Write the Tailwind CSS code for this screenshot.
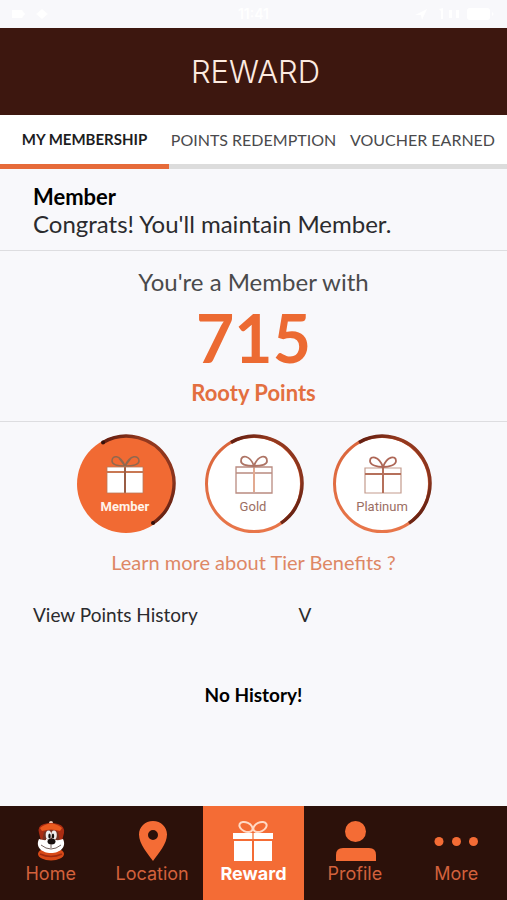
<!DOCTYPE html>
<html lang="en">
<head>
<meta charset="utf-8">
<meta name="viewport" content="width=device-width, initial-scale=1">
<title>Reward</title>
<script src="https://cdn.jsdelivr.net/npm/@tailwindcss/browser@4"></script>
</head>
<body class="flex min-h-screen flex-col bg-[#f8f8fb] font-['Lato',sans-serif] text-[#2b2b2e]">
<svg class="absolute size-0" aria-hidden="true">
  <defs>
    <linearGradient id="ringLight" x1="0" y1="0" x2="0" y2="1"><stop offset="0" stop-color="#d9643a"/><stop offset="1" stop-color="#e8764a"/></linearGradient>
    <linearGradient id="ringDark" x1="0" y1="0" x2="1" y2="1"><stop offset="0" stop-color="#5e1c10"/><stop offset=".3" stop-color="#94391f"/><stop offset=".75" stop-color="#8a341d"/><stop offset="1" stop-color="#4a140b"/></linearGradient>
  </defs>
</svg>

<div class="flex h-7 items-center justify-between px-3 font-['Inter',sans-serif] text-sm font-semibold text-white">
  <svg class="h-3 w-20" viewBox="0 0 80 12" fill="#fff" aria-hidden="true"><path d="M0 2h10l3 4-3 4H0zM24 6l6-5 6 5-6 5z"/></svg>
  <span>11:41</span>
  <svg class="h-3 w-20" viewBox="0 0 80 12" aria-hidden="true"><path d="M0 7l12-6-5 11-1-5zM24 1l4-1v11h-2V3zM34 2h3v8h-3zM41 2h3v8h-3z" fill="#fff"/><rect x="52" y="0" width="23" height="12" rx="3" fill="#fff"/><path d="M77 4q3 2 0 4z" fill="#fff"/></svg>
</div>

<header class="flex h-[87px] items-center justify-center bg-[#3d170f] pl-1">
  <h1 class="font-['Inter',sans-serif] text-[31px] leading-10 font-light text-[#fdebe0]">REWARD</h1>
</header>

<nav aria-label="Reward sections" class="grid h-[54px] grid-cols-3 bg-white text-base whitespace-nowrap text-[#4a4a4c]">
  <a href="#membership" aria-current="page" class="flex items-center justify-center border-b-5 border-[#e66b3a] text-[15px] font-bold text-[#1d1d1f]">MY MEMBERSHIP</a>
  <a href="#redemption" class="flex items-center justify-center border-b-5 border-[#dcdcdc]">POINTS REDEMPTION</a>
  <a href="#vouchers" class="flex items-center justify-center border-b-5 border-[#dcdcdc]">VOUCHER EARNED</a>
</nav>

<main id="membership" class="flex grow flex-col">
  <section class="border-b border-[#dddde0] px-[33px] pt-[14px] pb-3">
    <h2 class="text-[22px] leading-[27px] font-bold text-black">Member</h2>
    <p class="text-2xl leading-7">Congrats! You'll maintain Member.</p>
  </section>

  <section class="flex flex-col items-center border-b border-[#dddde0] pt-[15px] pb-3">
    <p class="text-2xl leading-8 text-[#4a4a4c]">You're a Member with</p>
    <p class="text-[66px] leading-[79px] font-bold text-[#ec6a32]">715</p>
    <p class="text-[22px] leading-8 font-bold text-[#e36f40]">Rooty Points</p>
  </section>

  <section class="flex flex-col items-center pt-3">
    <div class="flex gap-7">
      <svg class="size-[100px]" viewBox="0 0 100 100" role="img" aria-label="Member">
        <circle cx="50" cy="50" r="49" fill="#f16a33"/>
        <path d="M27 8.400A47.500 47.500 0 0 1 77 89.100" fill="none" stroke="url(#ringDark)" stroke-width="3.400"/>
        <circle cx="27" cy="8.400" r="2" fill="#35100a"/><circle cx="77" cy="89" r="2" fill="#35100a"/>
        <g fill="none" stroke="#90684f" stroke-width="1.500"><path d="M49 32C44 20 36 21 36 27c0 4 7 5 13 5M49 32c5-12 14-11 14-5 0 4-8 5-14 5M49 32l-6-8M49 32l6-8"/></g>
        <path d="M31 33h36v26H31z" fill="#fff"/>
        <path d="M31 38h36" stroke="#c87854" stroke-width="2"/><path d="M49 33v26" stroke="#995d45" stroke-width="2"/>
        <path d="M31 33h36v26H31z" fill="none" stroke="#b9795a" stroke-width=".8"/>
        <text x="49" y="77" text-anchor="middle" class="font-['Roboto',sans-serif] text-[13px] font-bold" fill="#fff3e9">Member</text>
      </svg>
      <svg class="size-[100px]" viewBox="0 0 100 100" role="img" aria-label="Gold">
        <circle cx="50" cy="50" r="47.500" fill="#fff" stroke="url(#ringLight)" stroke-width="3"/>
        <path d="M27 8.400A47.500 47.500 0 0 1 77 89.100" fill="none" stroke="url(#ringDark)" stroke-width="3.400"/>
        <path d="M32 33h36v26H32zM32 39h36" fill="none" stroke="#b98b80" stroke-width="1.300"/><path d="M50 34v24" stroke="#e2aa91" stroke-width="2"/>
        <path d="M50 32C46 21 37 20 37 27c0 4 7 5 13 5 6 0 13-1 13-5 0-7-9-6-13 5z" fill="none" stroke="#ad7364" stroke-width="1.800"/>
        <text x="49" y="77" text-anchor="middle" class="font-['Roboto',sans-serif] text-[13px]" fill="#9b6e63">Gold</text>
      </svg>
      <svg class="size-[100px]" viewBox="0 0 100 100" role="img" aria-label="Platinum">
        <circle cx="50" cy="50" r="47.500" fill="#fff" stroke="url(#ringLight)" stroke-width="3"/>
        <path d="M27 8.400A47.500 47.500 0 0 1 77 89.100" fill="none" stroke="url(#ringDark)" stroke-width="3.400"/>
        <path d="M33 34h36v25H33z" fill="none" stroke="#c39b8d" stroke-width="1.200"/><path d="M33 40h36M51 33v26" stroke="#b5705b" stroke-width="2"/>
        <path d="M51 33C47 22 38 21 38 27c0 4 7 6 13 6 6 0 13-2 13-6 0-6-9-5-13 6z" fill="none" stroke="#ad6656" stroke-width="1.800"/>
        <text x="50" y="77" text-anchor="middle" class="font-['Roboto',sans-serif] text-[13px]" fill="#9b6e63">Platinum</text>
      </svg>
    </div>
    <a href="#benefits" class="mt-[14px] text-xl leading-7 text-[#de8765]">Learn more about Tier Benefits ?</a>
  </section>

  <section class="pt-[25px]">
    <button type="button" aria-expanded="true" class="grid w-full grid-cols-[56%_1fr] pl-[33px] text-left text-[19px] leading-7"><span>View Points History</span><span aria-hidden="true">V</span></button>
    <p class="pt-[52px] text-center text-[19px] leading-7 font-bold text-black">No History!</p>
  </section>
</main>

<nav aria-label="Main" class="grid h-[94px] grid-cols-5 bg-[#2c110a] font-['Inter',sans-serif] text-[18px] leading-[26px] text-[#d3613c]">
  <a href="#home" class="flex flex-col items-center pt-[14px]">
    <svg class="h-[41px] w-11" viewBox="0 0 44 41" aria-hidden="true">
      <circle cx="22" cy="3" r="2" fill="#e7c5b5"/>
      <ellipse cx="22" cy="34" rx="13" ry="6.500" fill="#d84a18"/>
      <path d="M10 13q-2-7 5-9 7-2 14 0 7 2 6 9l-2 8H12z" fill="#a92c12"/>
      <path d="M11 8q11-9 22 0l-2 3q-9-3-18 0z" fill="#e95a1f"/>
      <path d="M15 12q7-4 14 0l2 9H13z" fill="#743222"/>
      <path d="M10 19c4 1 7 2 9 0h6c3 2 6 1 9 0 4 8-3 14-12 14S6 27 10 19z" fill="#fff"/>
      <ellipse cx="19.500" cy="15" rx="2.800" ry="4.500" fill="#eee"/><ellipse cx="25" cy="15" rx="2.800" ry="4.500" fill="#eee"/>
      <ellipse cx="20.500" cy="16" rx="1.200" ry="2.500" fill="#16100e"/><ellipse cx="24" cy="16" rx="1.200" ry="2.500" fill="#16100e"/>
      <ellipse cx="22.500" cy="21.500" rx="4" ry="3" fill="#17100f"/>
      <path d="M12 25q10 8 20 0M22 24v4" fill="none" stroke="#75645f"/>
      <path d="M11 34q11 5 22 0" fill="none" stroke="#9f2b10" stroke-width="1.500"/>
    </svg>
    <span>Home</span>
  </a>
  <a href="#location" class="flex flex-col items-center pt-[14px]">
    <svg class="h-[41px] w-11" viewBox="0 0 44 41" aria-hidden="true"><path fill="#f46c35" fill-rule="evenodd" d="M23 1C15 1 9 7 9 14.500 9 24 18 34 23 41c5-7 14-17 14-26.500C37 7 31 1 23 1zm0 9a5 5 0 1 1 0 10 5 5 0 0 1 0-10z"/></svg>
    <span>Location</span>
  </a>
  <a href="#reward" aria-current="page" class="flex flex-col items-center bg-[#f46c35] pt-[14px] font-bold text-white">
    <svg class="h-[41px] w-11" viewBox="0 0 44 41" aria-hidden="true"><path d="M2 13h40v6H2zM3 21h18v20H3zM23 21h18v20H23z" fill="#fff"/><path d="M22 13v6" stroke="#f6a681" stroke-width="2"/><g fill="none" stroke="#ffd9c5" stroke-width="2"><ellipse cx="15" cy="7" rx="7" ry="4.500" transform="rotate(25 15 7)"/><ellipse cx="29" cy="7" rx="7" ry="4.500" transform="rotate(-25 29 7)"/></g></svg>
    <span>Reward</span>
  </a>
  <a href="#profile" class="flex flex-col items-center pt-[14px]">
    <svg class="h-[41px] w-11" viewBox="0 0 44 41" fill="#f46c35" aria-hidden="true"><circle cx="22.500" cy="11.500" r="10.500"/><path d="M3 41v-6q0-7 7-7h26q7 0 7 7v6z"/></svg>
    <span>Profile</span>
  </a>
  <a href="#more" class="flex flex-col items-center pt-[14px]">
    <svg class="h-[41px] w-11" viewBox="0 0 44 41" fill="#f46c35" aria-hidden="true"><circle cx="5" cy="21.500" r="4.500"/><circle cx="22.500" cy="21.500" r="4.500"/><circle cx="39.500" cy="21.500" r="4.500"/></svg>
    <span>More</span>
  </a>
</nav>
</body>
</html>
